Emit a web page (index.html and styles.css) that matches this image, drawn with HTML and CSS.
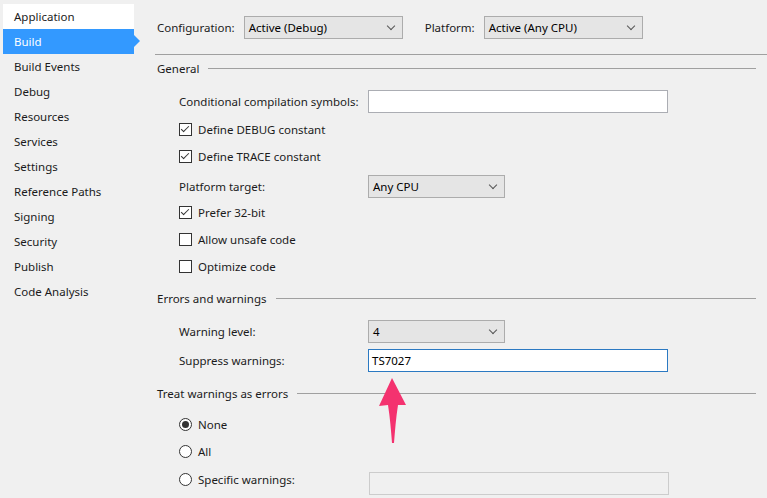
FILE: index.html
```html
<!DOCTYPE html>
<html>
<head>
<meta charset="utf-8">
<link rel="stylesheet" href="styles.css">
</head>
<body>
<div class="app">
  <nav class="sidebar">
    <div class="nav-item active-white">Application</div>
    <div class="nav-item selected">Build<span class="nav-arrow"></span></div>
    <div class="nav-item">Build Events</div>
    <div class="nav-item">Debug</div>
    <div class="nav-item">Resources</div>
    <div class="nav-item">Services</div>
    <div class="nav-item">Settings</div>
    <div class="nav-item">Reference Paths</div>
    <div class="nav-item">Signing</div>
    <div class="nav-item">Security</div>
    <div class="nav-item">Publish</div>
    <div class="nav-item">Code Analysis</div>
  </nav>
  <main class="content">
    <div class="topbar">
      <span class="top-label">Configuration:</span>
      <div class="select top-select">Active (Debug)<span class="chev"></span></div>
      <span class="top-label platform-label">Platform:</span>
      <div class="select top-select">Active (Any CPU)<span class="chev"></span></div>
    </div>

    <div class="sec-head mt-general"><span>General</span><span class="sec-line"></span></div>

    <div class="row mt-cond">
      <span class="label">Conditional compilation symbols:</span>
      <div class="textbox"></div>
    </div>
    <div class="row mt-6"><span class="check checked"></span><span>Define DEBUG constant</span></div>
    <div class="row mt-5"><span class="check checked"></span><span>Define TRACE constant</span></div>
    <div class="row mt-8">
      <span class="label">Platform target:</span>
      <div class="select small-select">Any CPU<span class="chev"></span></div>
    </div>
    <div class="row mt-4"><span class="check checked"></span><span>Prefer 32-bit</span></div>
    <div class="row mt-5"><span class="check"></span><span>Allow unsafe code</span></div>
    <div class="row mt-5"><span class="check"></span><span>Optimize code</span></div>

    <div class="sec-head mt-10"><span>Errors and warnings</span><span class="sec-line"></span></div>
    <div class="row mt-11">
      <span class="label">Warning level:</span>
      <div class="select small-select">4<span class="chev"></span></div>
    </div>
    <div class="row mt-7">
      <span class="label">Suppress warnings:</span>
      <div class="textbox focused">TS7027</div>
    </div>

    <div class="sec-head mt-11"><span>Treat warnings as errors</span><span class="sec-line"></span></div>
    <div class="row mt-9"><span class="radio selected-radio"></span><span>None</span></div>
    <div class="row mt-5"><span class="radio"></span><span>All</span></div>
    <div class="row row-specific mt-6">
      <span class="label radio-label"><span class="radio"></span><span>Specific warnings:</span></span>
      <div class="textbox disabled"></div>
    </div>

    <svg class="pointer" width="40" height="80" viewBox="0 0 40 80">
      <path d="M18 0 L32 27 L24 27 C22 40 21 52 20 65 L18 65 C17 52 16 40 14 27 L5 28 Z" fill="#f4326f"/>
    </svg>
  </main>
</div>
</body>
</html>
```
FILE: styles.css
```css
html, body {
  margin: 0;
  padding: 0;
  background: #f0f0f0;
}
body {
  font-family: "Noto Sans", "Open Sans", sans-serif;
  font-size: 11.5px;
  color: #1b1b1b;
  width: 767px;
  height: 498px;
  overflow: hidden;
}
.app {
  display: flex;
  height: 498px;
}
.sidebar {
  width: 131px;
  padding: 4px 0 0 3px;
  flex: none;
}
.nav-item {
  position: relative;
  height: 25px;
  line-height: 26px;
  padding-left: 11px;
  white-space: nowrap;
}
.active-white {
  background: #ffffff;
}
.selected {
  background: #3399ff;
  color: #ffffff;
}
.nav-arrow {
  position: absolute;
  right: -6px;
  top: 6px;
  width: 0;
  height: 0;
  border-top: 6px solid transparent;
  border-bottom: 6px solid transparent;
  border-left: 6px solid #3399ff;
}
.content {
  position: relative;
  flex: 1;
  margin-left: 21px;
}
.topbar {
  height: 54px;
  border-bottom: 1px solid #a0a0a0;
  display: flex;
  align-items: center;
  padding-left: 2px;
}
.top-label {
  margin-right: 9px;
}
.platform-label {
  margin-left: 22px;
  margin-right: 9px;
}
.select {
  position: relative;
  box-sizing: border-box;
  height: 23px;
  line-height: 21px;
  background: #e5e5e5;
  border: 1px solid #acacac;
  padding-left: 4px;
  color: #000;
}
.top-select {
  width: 159px;
}
.small-select {
  width: 137px;
}
.chev {
  position: absolute;
  right: 8px;
  top: 6px;
  width: 5px;
  height: 5px;
  border-right: 1px solid #555;
  border-bottom: 1px solid #555;
  transform: rotate(45deg);
}
.sec-head {
  display: flex;
  align-items: center;
  height: 22px;
  padding-left: 2px;
  margin-right: 11px;
}
.sec-line {
  flex: 1;
  height: 1px;
  background: #a0a0a0;
  margin-left: 9px;
  margin-top: 1px;
}
.row {
  display: flex;
  align-items: center;
  height: 22px;
  padding-left: 24px;
}
.label {
  width: 189px;
  flex: none;
}
.textbox {
  box-sizing: border-box;
  width: 300px;
  height: 23px;
  line-height: 21px;
  background: #fff;
  border: 1px solid #abadb3;
  padding-left: 3px;
  color: #000;
}
.textbox.focused {
  border-color: #2b79c2;
}
.textbox.disabled {
  background: #f0f0f0;
  border-color: #cccccc;
  margin-top: 4px;
  margin-left: 1px;
}
.row-specific {
  align-items: flex-start;
  height: 32px;
}
.radio-label {
  display: flex;
  align-items: center;
  height: 22px;
}
.check {
  box-sizing: border-box;
  width: 13px;
  height: 13px;
  border: 1px solid #333;
  background: #fff;
  margin-right: 6px;
  position: relative;
  flex: none;
}
.check.checked::after {
  content: "";
  position: absolute;
  left: 3px;
  top: 0px;
  width: 3px;
  height: 7px;
  border-right: 1.5px solid #333;
  border-bottom: 1.5px solid #333;
  transform: rotate(45deg);
}
.radio {
  box-sizing: border-box;
  width: 13px;
  height: 13px;
  border: 1px solid #333;
  border-radius: 50%;
  background: #fff;
  margin-right: 6px;
  position: relative;
  flex: none;
}
.selected-radio::after {
  content: "";
  position: absolute;
  left: 2px;
  top: 2px;
  width: 7px;
  height: 7px;
  border-radius: 50%;
  background: #333;
}
.pointer {
  position: absolute;
  left: 219px;
  top: 378px;
}
.mt-general { margin-top: 2px; }
.mt-cond { margin-top: 11px; }
.mt-4 { margin-top: 4px; }
.mt-5 { margin-top: 5px; }
.mt-6 { margin-top: 6px; }
.mt-7 { margin-top: 7px; }
.mt-8 { margin-top: 8px; }
.mt-9 { margin-top: 9px; }
.mt-10 { margin-top: 10px; }
.mt-11 { margin-top: 11px; }
```
